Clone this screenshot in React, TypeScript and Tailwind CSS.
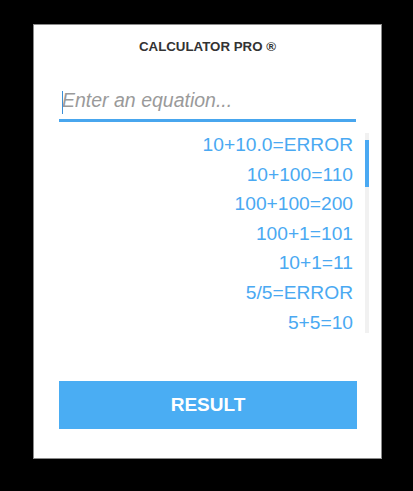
import { useState } from 'react';

const history = [
  '10+10.0=ERROR',
  '10+100=110',
  '100+100=200',
  '100+1=101',
  '10+1=11',
  '5/5=ERROR',
  '5+5=10',
];

export default function App() {
  const [equation, setEquation] = useState('');

  return (
    <div className="min-h-screen bg-black pt-[24px] font-['Liberation_Sans',Arial,sans-serif]">
      <div className="ml-[33px] w-[349px] border border-[#8a8a8a] bg-white pt-[14px] pb-[29px]">
        <h1 className="text-center text-[13.3px] leading-[15px] font-bold text-[#333]">
          CALCULATOR PRO ®
        </h1>

        <div className="relative mx-[25px] mt-[28px]">
          <input
            type="text"
            value={equation}
            onChange={(e) => setEquation(e.target.value)}
            placeholder="Enter an equation..."
            className="h-[40px] w-full border-b-[3px] border-[#48a6ee] pl-[3px] text-[19.5px] text-[#333] italic placeholder-[#9a9a9a] outline-none"
          />
          {equation === '' && (
            <span className="absolute top-[9px] left-[3px] h-[23px] w-px bg-[#3b8fd6]" />
          )}
        </div>

        <div className="mt-[8px] ml-[25px] mr-[12px] flex h-[210px] gap-[12px]">
          <ul className="flex-1 text-right text-[19.2px] leading-[29.6px] text-[#4aa9f2]">
            {history.map((item) => (
              <li key={item}>{item}</li>
            ))}
          </ul>
          <div className="mt-[3px] h-[200px] w-[4px] bg-[#f1f1f1] pt-[7px]">
            <div className="h-[47px] w-full bg-[#4aa9f2]" />
          </div>
        </div>

        <button
          type="button"
          className="mx-[25px] mt-[41px] block h-[48px] w-[298px] bg-[#4aadf3] text-[19px] font-bold text-white"
        >
          RESULT
        </button>
      </div>
    </div>
  );
}
